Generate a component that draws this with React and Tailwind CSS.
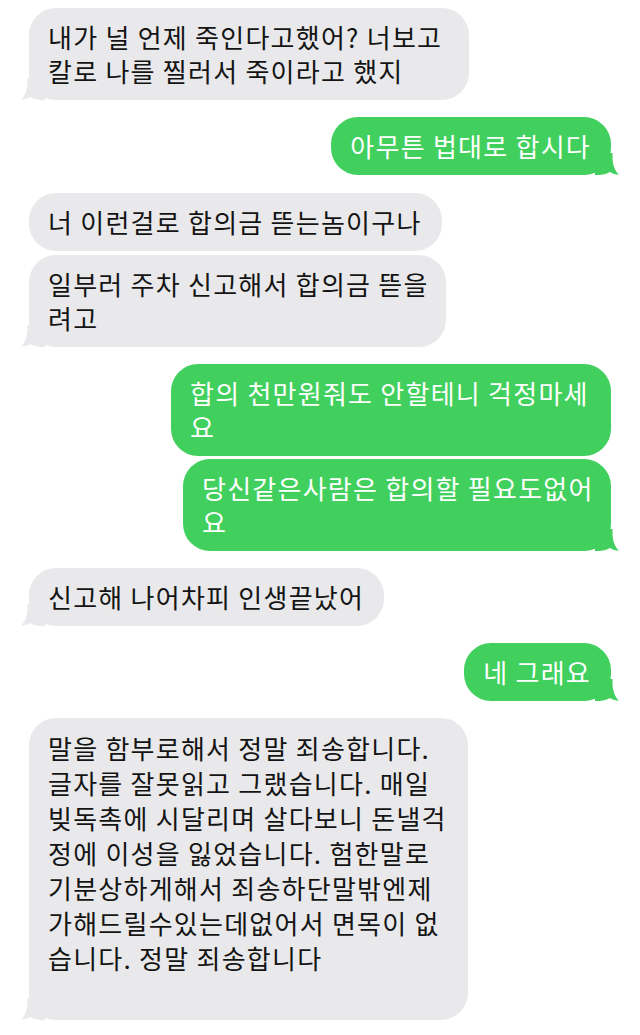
import React from 'react';

const messages = [
  { from: 'them', lines: ['내가 널 언제 죽인다고했어? 너보고', '칼로 나를 찔러서 죽이라고 했지'], tail: true, w: 'w-[440px]' },
  { from: 'me', lines: ['아무튼 법대로 합시다'], tail: true, mt: 'mt-[17px]' },
  { from: 'them', lines: ['너 이런걸로 합의금 뜯는놈이구나'], tail: false, mt: 'mt-[18px]' },
  { from: 'them', lines: ['일부러 주차 신고해서 합의금 뜯을', '려고'], tail: true, mt: 'mt-1', w: 'w-[417px]' },
  { from: 'me', lines: ['합의 천만원줘도 안할테니 걱정마세', '요'], tail: false, mt: 'mt-[17px]', w: 'w-[440px]' },
  { from: 'me', lines: ['당신같은사람은 합의할 필요도없어', '요'], tail: true, mt: 'mt-[3px]', w: 'w-[428px]' },
  { from: 'them', lines: ['신고해 나어차피 인생끝났어'], tail: true, mt: 'mt-[17px]' },
  { from: 'me', lines: ['네 그래요'], tail: true, mt: 'mt-[17px]' },
  {
    from: 'them',
    lines: [
      '말을 함부로해서 정말 죄송합니다.',
      '글자를 잘못읽고 그랬습니다. 매일',
      '빚독촉에 시달리며 살다보니 돈낼걱',
      '정에 이성을 잃었습니다. 험한말로',
      '기분상하게해서 죄송하단말밖엔제',
      '가해드릴수있는데없어서 면목이 없',
      '습니다. 정말 죄송합니다',
    ],
    tail: true,
    mt: 'mt-[17px]',
    w: 'w-[439px]',
    extra: 'pb-[45px] leading-[35px]',
  },
];

function Tail({ side }) {
  if (side === 'them') {
    return (
      <svg className="absolute -left-[8px] bottom-0" width="24" height="22" viewBox="0 0 24 22">
        <path d="M24 0 L24 22 C18 22 13 21.5 9 19 C6 20.8 3 21.6 0 21.6 C4 18 6.5 12 6.5 4 L6.5 0 Z" fill="#e9e9eb" />
      </svg>
    );
  }
  return (
    <svg className="absolute -right-[8px] bottom-0" width="24" height="22" viewBox="0 0 24 22">
      <path d="M0 0 L0 22 C6 22 11 21.5 15 19 C18 20.8 21 21.6 24 21.6 C20 18 17.5 12 17.5 4 L17.5 0 Z" fill="#41d05d" />
    </svg>
  );
}

function Bubble({ msg }) {
  const them = msg.from === 'them';
  return (
    <div className={`flex ${them ? 'justify-start' : 'justify-end'} ${msg.mt || ''}`}>
      <div
        className={`relative rounded-[27px] py-3 pl-[19px] pr-[20px] text-[26px] leading-[34px] tracking-[1.25px] ${
          them ? 'bg-[#e9e9eb] text-[#141414]' : 'bg-[#41d05d] text-white'
        } ${msg.w || 'w-fit'} ${msg.extra || ''}`}
      >
        {msg.tail && <Tail side={msg.from} />}
        <div className="relative">
          {msg.lines.map((l, i) => (
            <div key={i} className="whitespace-nowrap">
              {l}
            </div>
          ))}
        </div>
      </div>
    </div>
  );
}

export default function App() {
  return (
    <div
      className="min-h-[1035px] w-[640px] bg-white px-[29px] pt-2"
      style={{ fontFamily: '"Noto Sans CJK KR", "Noto Sans", sans-serif' }}
    >
      {messages.map((m, i) => (
        <Bubble key={i} msg={m} />
      ))}
    </div>
  );
}
